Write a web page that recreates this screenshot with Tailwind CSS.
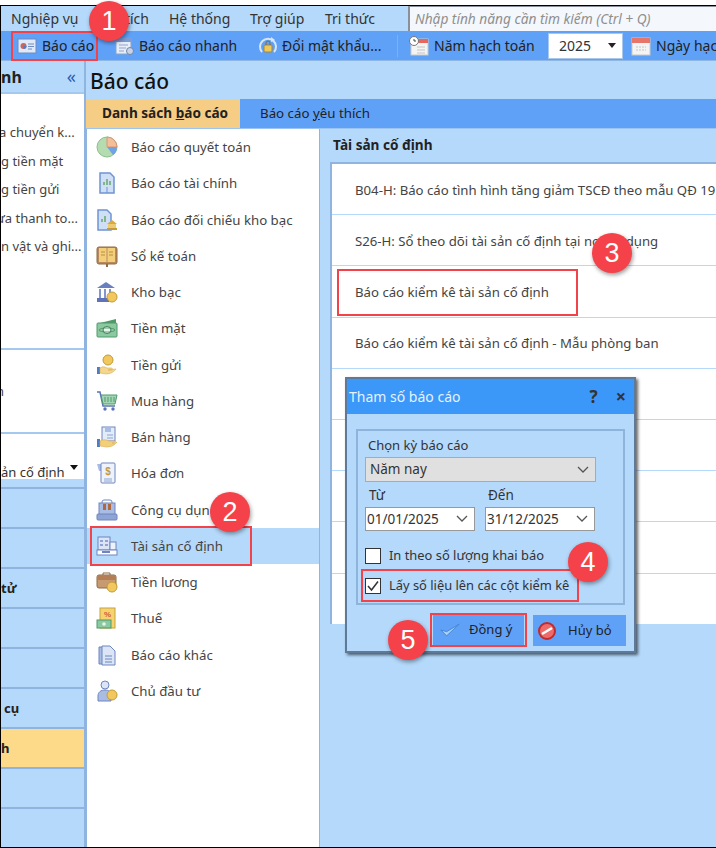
<!DOCTYPE html>
<html lang="vi">
  <head>
    <meta charset="UTF-8" />
    <title>Báo cáo</title>
    <script src="https://cdn.jsdelivr.net/npm/@tailwindcss/browser@4"></script>
  </head>
  <body class="bg-white text-[#222] font-['Noto_Sans',sans-serif] text-[13px]">
    <div class="relative w-[716px] h-[848px] overflow-hidden pt-[5px]">
      <div class="h-[843px] border-y border-l border-black bg-[#b5d9fb] flex flex-col">
        <!-- Menu -->
        <div class="h-[25px] flex items-center shrink-0 text-[14px] text-[#333]">
          <div class="flex w-[407px] shrink-0 pl-[10px] gap-[20px] whitespace-nowrap">
            <span class="w-[68px]">Nghiệp vụ</span>
            <span class="w-[58px] -ml-[8px] flex justify-end overflow-hidden">Phân tích</span>
            <span class="w-[61px]">Hệ thống</span>
            <span class="w-[55px]">Trợ giúp</span>
            <span>Tri thức</span>
          </div>
          <div class="flex-1 h-[25px] bg-[#f4f8fd] border-l-2 border-t border-[#8a9099] pl-[5px] italic text-[#8f8f8f] text-[13.7px] leading-[23px] whitespace-nowrap overflow-hidden">Nhập tính năng cần tìm kiếm (Ctrl + Q)</div>
        </div>
        <!-- Toolbar -->
        <div class="h-[30px] shrink-0 bg-[#60a1f8] border-b border-[#8fb7e6] flex items-center text-[14px] text-[#222] whitespace-nowrap overflow-hidden">
          <div class="w-[107px] shrink-0 pl-[16px] flex items-center gap-[5px]">
            <svg class="shrink-0" width="20" height="18" viewBox="0 0 20 18"><rect x="1" y="2" width="18" height="14" fill="#dfe9f8" stroke="#6f8cc0"/><circle cx="6.500" cy="9" r="3" fill="#c9675f"/><path d="M6.500 9h3a3 3 0 0 1-3 3z" fill="#4f7cc6"/><path d="M11 7h6M11 9.500h6M11 12h4" stroke="#6f8cc0"/></svg>
            <span>Báo cáo</span>
          </div>
          <div class="w-[143px] shrink-0 pl-[7px] flex items-center gap-[4px]">
            <svg class="shrink-0" width="20" height="20" viewBox="0 0 20 20"><rect x="1" y="3" width="15" height="15" fill="#e8eef8" stroke="#8aa3c8"/><rect x="1" y="3" width="15" height="3" fill="#7f9bd4"/><path d="M4 9h9M4 12h7M4 15h5" stroke="#8ea6cc"/><circle cx="15" cy="15" r="3.500" fill="#c7d4e8" stroke="#6f85aa"/></svg>
            <span>Báo cáo nhanh</span>
          </div>
          <div class="w-[146px] shrink-0 pl-[7px] flex items-center gap-[4px]">
            <svg class="shrink-0" width="20" height="20" viewBox="0 0 20 20"><path d="M4 16A8 8 0 1 1 16 16" fill="none" stroke="#dbe6f5" stroke-width="2"/><path d="M13 1l4 3-4 2z" fill="#dbe6f5"/><rect x="6" y="9" width="8" height="7" rx="1" fill="#f0c95b" stroke="#a98530"/><path d="M8 9V7a2 2 0 0 1 4 0v2" fill="none" stroke="#7d6a3d"/></svg>
            <span>Đổi mật khẩu...</span>
          </div>
          <div class="w-px h-[22px] shrink-0 bg-[#7fb1ef]"></div>
          <div class="w-[150px] shrink-0 pl-[11px] flex items-center gap-[5px]">
            <svg class="shrink-0" width="20" height="20" viewBox="0 0 20 20"><rect x="2" y="3" width="17" height="16" fill="#f4f4f4" stroke="#c9c9c9"/><rect x="2" y="3" width="17" height="4" fill="#e8665a"/><path d="M8 11h8M8 14h8M8 17h8" stroke="#c4c4c4"/><circle cx="5" cy="5" r="4.500" fill="#fff" stroke="#777"/><path d="M5 3v2h2" stroke="#444" fill="none"/></svg>
            <span>Năm hạch toán</span>
          </div>
          <div class="w-[75px] h-[26px] shrink-0 bg-white border border-[#a8c8ee] flex items-center justify-between pl-[10px] pr-[6px] text-[#333] text-[14px]">
            <span>2025</span>
            <span class="w-0 h-0 border-x-[4px] border-x-transparent border-t-[5px] border-t-[#222]"></span>
          </div>
          <div class="pl-[8px] shrink-0 flex items-center gap-[5px]">
            <svg class="shrink-0" width="20" height="20" viewBox="0 0 20 20"><rect x="1" y="2" width="18" height="17" fill="#f4f4f4" stroke="#c9c9c9"/><rect x="1" y="2" width="18" height="5" fill="#e8756a"/><path d="M5 11h10M5 14h10" stroke="#c4c4c4" stroke-dasharray="2 1"/></svg>
            <span>Ngày hạch toán</span>
          </div>
        </div>
        <div class="flex-1 flex min-h-0">
          <!-- Sidebar -->
          <div class="w-[85px] shrink-0 border-r-2 border-[#8fb4e0] flex flex-col">
            <div class="h-[33px] shrink-0 flex items-center justify-between pr-[8px] border-b-2 border-[#a5c8ee] font-bold text-[16px] text-[#222]">
              <span>nh</span>
              <span class="text-[#2c5cb0] text-[18px] font-normal">«</span>
            </div>
            <div class="h-[256px] shrink-0 bg-white border-b-2 border-[#a5c8ee] text-[#444] text-[13px] whitespace-nowrap overflow-hidden pt-[24px]">
              <div class="h-[28.5px] leading-[28px] -ml-[2px]">a chuyển k...</div>
              <div class="h-[28.5px] leading-[28px]">g tiền mặt</div>
              <div class="h-[28.5px] leading-[28px]">g tiền gửi</div>
              <div class="h-[28.5px] leading-[28px] -ml-[5px]">ưa thanh to...</div>
              <div class="h-[28.5px] leading-[28px]">n vật và ghi...</div>
            </div>
            <div class="h-[84px] shrink-0 bg-white border-b-2 border-[#a5c8ee] pt-[32px] text-[#444] overflow-hidden"><span class="-ml-[5px] block">n</span></div>
            <div class="h-[45px] shrink-0 bg-white flex items-end justify-between pr-[6px] text-[13px] text-[#333] whitespace-nowrap">
              <span class="leading-[14px]">ản cố định</span>
              <span class="w-0 h-0 border-x-[4px] border-x-transparent border-t-[5px] border-t-[#111] mb-[9px]"></span>
            </div>
            <div class="h-[8px] shrink-0"></div>
            <div class="flex-1 flex flex-col font-bold text-[13px] text-[#222]">
              <div class="h-[40px] border-t-2 border-[#8fb4e0]"></div>
              <div class="h-[40px] border-t-2 border-[#8fb4e0]"></div>
              <div class="h-[40px] border-t-2 border-[#8fb4e0] leading-[38px]">tử</div>
              <div class="h-[40px] border-t-2 border-[#8fb4e0]"></div>
              <div class="h-[40px] border-t-2 border-[#8fb4e0]"></div>
              <div class="h-[40px] border-t-2 border-[#8fb4e0] leading-[38px] pl-[3px]">cụ</div>
              <div class="h-[40px] border-t-2 border-[#8fb4e0] bg-[#fdd98a] leading-[38px]">h</div>
              <div class="h-[40px] border-t-2 border-[#8fb4e0]"></div>
              <div class="h-[40px] border-t-2 border-[#8fb4e0]"></div>
            </div>
          </div>
          <!-- Main -->
          <div class="flex-1 flex flex-col min-w-0">
            <div class="h-[38px] shrink-0 flex items-center pl-[4px] pt-[3px] text-[21px] font-medium text-[#111]">Báo cáo</div>
            <div class="h-[30px] shrink-0 bg-[#60a1f8] border-b border-[#9cc4f2] flex items-stretch text-[13.3px]">
              <div class="w-[154px] bg-[#f5cd85] flex items-center pl-[16px] font-bold text-[13.6px] text-[#222] whitespace-nowrap"><span>Danh sách <u>b</u>áo cáo</span></div>
              <div class="pl-[20px] flex items-center text-[#222]"><span>Báo cáo <u>y</u>êu thích</span></div>
            </div>
            <div class="flex-1 flex min-h-0">
              <!-- Report groups -->
              <div class="w-[233px] shrink-0 bg-white border-l border-[#8fb4e0] text-[#444] text-[13.25px]">
                <div class="h-[36.25px] flex items-center pl-[9px] gap-[13px]">
                  <svg class="shrink-0" width="22" height="22" viewBox="0 0 22 22"><circle cx="11" cy="11" r="10" fill="#b5dcb0" stroke="#8cbf8a"/><path d="M11 11V1a10 10 0 0 1 10 10z" fill="#f3bf9b" stroke="#d99670"/><path d="M11 11h10a10 10 0 0 1-4 8z" fill="#6fa3e6"/></svg>
                  <span class="pt-[2px]">Báo cáo quyết toán</span>
                </div>
                <div class="h-[36.25px] flex items-center pl-[9px] gap-[13px]">
                  <svg class="shrink-0" width="22" height="22" viewBox="0 0 22 22"><path d="M4 1h10l4 4v16H4z" fill="#cfe0f6" stroke="#6f94d4" stroke-width="1.500"/><path d="M8 10v3M11 7v6M14 9v4" stroke="#6aa66a" stroke-width="1.500"/><path d="M11 15v6" stroke="#6f94d4"/></svg>
                  <span class="pt-[2px]">Báo cáo tài chính</span>
                </div>
                <div class="h-[36.25px] flex items-center pl-[9px] gap-[13px]">
                  <svg class="shrink-0" width="22" height="22" viewBox="0 0 22 22"><path d="M2 1h9l4 4v16H2z" fill="#cfe0f6" stroke="#6f94d4" stroke-width="1.500"/><path d="M6 10v3M9 7v6" stroke="#6aa66a" stroke-width="1.500"/><path d="M11 15l5-4 5 4z" fill="#d9a93f"/><rect x="12" y="15" width="8" height="4" fill="#eccb73"/><rect x="11" y="19" width="10" height="2" fill="#c99a34"/></svg>
                  <span class="pt-[2px]">Báo cáo đối chiếu kho bạc</span>
                </div>
                <div class="h-[36.25px] flex items-center pl-[9px] gap-[13px]">
                  <svg class="shrink-0" width="22" height="22" viewBox="0 0 22 22"><rect x="1" y="2" width="20" height="17" rx="2" fill="#b98a5e" stroke="#8f6a45"/><rect x="3" y="3" width="7.500" height="14" fill="#f3cf7c"/><rect x="11.500" y="3" width="7.500" height="14" fill="#f3cf7c"/><path d="M5 7h4M5 10h4M13 7h4M13 10h4" stroke="#b98f3d"/><rect x="10" y="19" width="2" height="3" fill="#8f6a45"/></svg>
                  <span class="pt-[2px]">Sổ kế toán</span>
                </div>
                <div class="h-[36.25px] flex items-center pl-[9px] gap-[13px]">
                  <svg class="shrink-0" width="22" height="22" viewBox="0 0 22 22"><path d="M1 7l9-6 9 6z" fill="#6a7fc0"/><path d="M3 8h2v9H3zM8 8h2v9H8zM13 8h2v5h-2z" fill="#8297d0"/><rect x="1" y="17" width="12" height="4" fill="#5f74b8"/><circle cx="16" cy="16" r="5" fill="#f2c85e" stroke="#c29a35"/></svg>
                  <span class="pt-[2px]">Kho bạc</span>
                </div>
                <div class="h-[36.25px] flex items-center pl-[9px] gap-[13px]">
                  <svg class="shrink-0" width="22" height="22" viewBox="0 0 22 22"><path d="M4 6l16-4v4z" fill="#4f9a68"/><rect x="1" y="6" width="20" height="14" rx="1" fill="#8cc9a0" stroke="#4f9a68"/><ellipse cx="11" cy="13" rx="4" ry="3.500" fill="#e4f4e8" stroke="#3f8458"/><ellipse cx="11" cy="13" rx="8" ry="2" fill="none" stroke="#3f8458" stroke-width=".7"/></svg>
                  <span class="pt-[2px]">Tiền mặt</span>
                </div>
                <div class="h-[36.25px] flex items-center pl-[9px] gap-[13px]">
                  <svg class="shrink-0" width="22" height="22" viewBox="0 0 22 22"><circle cx="12" cy="6" r="5" fill="#f2c85e" stroke="#c29a35"/><rect x="1" y="13" width="3" height="7" fill="#4f7cc6"/><path d="M4 14c3-2 5-1 7 0h4c2 0 2 2 0 2h-3c3 0 6-1 8-1-2 3-6 5-10 5l-6-1z" fill="#f4d78f" stroke="#d6ad55" stroke-width=".6"/></svg>
                  <span class="pt-[2px]">Tiền gửi</span>
                </div>
                <div class="h-[36.25px] flex items-center pl-[9px] gap-[13px]">
                  <svg class="shrink-0" width="22" height="22" viewBox="0 0 22 22"><path d="M1 2h3l3 14h12" fill="none" stroke="#5b74b5" stroke-width="1.500"/><path d="M5 5h16l-2 9H7z" fill="#a3d4b6" stroke="#4f9a68"/><path d="M9 7v5M12 7v5M15 7v5M18 7v5" stroke="#4f9a68"/><circle cx="9" cy="19" r="1.700" fill="#5b74b5"/><circle cx="17" cy="19" r="1.700" fill="#5b74b5"/></svg>
                  <span class="pt-[2px]">Mua hàng</span>
                </div>
                <div class="h-[36.25px] flex items-center pl-[9px] gap-[13px]">
                  <svg class="shrink-0" width="22" height="22" viewBox="0 0 22 22"><rect x="6" y="1" width="13" height="14" fill="#e3ecf9" stroke="#6f85c0"/><rect x="9" y="2" width="6" height="4" fill="#a9bde4"/><path d="M11 9h6M11 12h6" stroke="#8ea4d4"/><rect x="1" y="13" width="3" height="8" fill="#4f7cc6"/><path d="M4 15c4-2 7-1 9 0h6c1 1-1 2-3 2 2 0 4 0 5-1-2 3-6 5-10 5l-7-1z" fill="#f4cf79" stroke="#d6ad55" stroke-width=".6"/></svg>
                  <span class="pt-[2px]">Bán hàng</span>
                </div>
                <div class="h-[36.25px] flex items-center pl-[9px] gap-[13px]">
                  <svg class="shrink-0" width="22" height="22" viewBox="0 0 22 22"><path d="M1 2h5v7H3z" fill="#a9bde4"/><rect x="5" y="1" width="14" height="20" rx="1" fill="#eef3fb" stroke="#6f85c0"/><path d="M8 17h8M8 19h8" stroke="#8ea4d4"/><text x="12" y="13" text-anchor="middle" font-size="10" font-weight="700" fill="#c49a35" font-family="Liberation Sans">$</text></svg>
                  <span class="pt-[2px]">Hóa đơn</span>
                </div>
                <div class="h-[36.25px] flex items-center pl-[9px] gap-[13px]">
                  <svg class="shrink-0" width="22" height="22" viewBox="0 0 22 22"><path d="M6 5V3a2 2 0 0 1 2-2h6a2 2 0 0 1 2 2v2" fill="none" stroke="#6f85c0"/><rect x="3" y="4" width="16" height="12" fill="#a9bde4" stroke="#6f85c0"/><path d="M7 5h3v6H7zM12 5h3v6h-3z" fill="#b0693f"/><rect x="1" y="15" width="20" height="6" rx="1" fill="#8ea4d4" stroke="#6f85c0"/></svg>
                  <span class="pt-[2px]">Công cụ dụng cụ</span>
                </div>
                <div class="h-[36.25px] flex items-center pl-[9px] gap-[13px] bg-[#b5d9fb]">
                  <svg class="shrink-0" width="22" height="22" viewBox="0 0 22 22"><rect x="2" y="2" width="12" height="13" fill="#dbe5f6" stroke="#6f85c0"/><path d="M4 5h3v2H4zM9 5h3v2H9zM4 9h3v2H4zM9 9h3v2H9z" fill="#8ea4d4"/><rect x="14" y="7" width="6" height="8" fill="#eef3fb" stroke="#6f85c0"/><rect x="1" y="15" width="20" height="5" fill="#fff" stroke="#6f85c0"/><rect x="6" y="16" width="8" height="2" fill="#6f85c0"/></svg>
                  <span class="pt-[2px]">Tài sản cố định</span>
                </div>
                <div class="h-[36.25px] flex items-center pl-[9px] gap-[13px]">
                  <svg class="shrink-0" width="22" height="22" viewBox="0 0 22 22"><path d="M7 4V2h7v2" fill="none" stroke="#8f6a45"/><rect x="1" y="4" width="19" height="13" rx="2" fill="#c89a72" stroke="#8f6a45"/><rect x="1" y="4" width="19" height="5" fill="#b47f55"/><circle cx="16" cy="16" r="5" fill="#f2c85e" stroke="#c29a35"/></svg>
                  <span class="pt-[2px]">Tiền lương</span>
                </div>
                <div class="h-[36.25px] flex items-center pl-[9px] gap-[13px]">
                  <svg class="shrink-0" width="22" height="22" viewBox="0 0 22 22"><rect x="4" y="1" width="15" height="20" fill="#f5d470" stroke="#c9a23b"/><text x="11.500" y="10" text-anchor="middle" font-size="8" font-weight="700" fill="#d2553f" font-family="Liberation Sans">%</text><rect x="1" y="13" width="14" height="8" fill="#8cc9a0" stroke="#4f9a68"/><circle cx="8" cy="17" r="1.800" fill="#e4f4e8"/></svg>
                  <span class="pt-[2px]">Thuế</span>
                </div>
                <div class="h-[36.25px] flex items-center pl-[9px] gap-[13px]">
                  <svg class="shrink-0" width="22" height="22" viewBox="0 0 22 22"><path d="M3 3h8v17H3z" fill="#a9bde4" stroke="#6f85c0"/><path d="M6 2h8l5 5v14H6z" fill="#dbe5f6" stroke="#6f85c0"/><path d="M9 12h7M9 15h7M9 18h7" stroke="#6f85c0"/></svg>
                  <span class="pt-[2px]">Báo cáo khác</span>
                </div>
                <div class="h-[36.25px] flex items-center pl-[9px] gap-[13px]">
                  <svg class="shrink-0" width="22" height="22" viewBox="0 0 22 22"><circle cx="9" cy="5" r="4" fill="#dbe5f6" stroke="#6f85c0"/><path d="M2 21v-5c0-4 3-6 7-6s6 2 6 6v5z" fill="#a9bde4" stroke="#6f85c0"/><circle cx="16" cy="15" r="5" fill="#f2c85e" stroke="#c29a35"/></svg>
                  <span class="pt-[2px]">Chủ đầu tư</span>
                </div>
              </div>
              <!-- Reports -->
              <div class="flex-1 min-w-0 border-l border-[#8fb4e0] pl-[10px] flex flex-col">
                <div class="h-[33px] shrink-0 flex items-center pl-[3px] font-bold text-[#222] text-[13.6px]">Tài sản cố định</div>
                <div class="h-[462px] shrink-0 bg-white border-l-2 border-t-2 border-[#8fb4e0] text-[#444] text-[13.2px] whitespace-nowrap overflow-hidden">
                  <div class="h-[51.2px] flex items-center pl-[23px] pt-[3px] border-b border-[#b5d9fb]">B04-H: Báo cáo tình hình tăng giảm TSCĐ theo mẫu QĐ 19</div>
                  <div class="h-[51.2px] flex items-center pl-[23px] pt-[3px] border-b border-[#b5d9fb]">S26-H: Sổ theo dõi tài sản cố định tại nơi sử dụng</div>
                  <div class="h-[51.2px] flex items-center pl-[23px] pt-[3px] border-b border-[#b5d9fb]">Báo cáo kiểm kê tài sản cố định</div>
                  <div class="h-[51.2px] flex items-center pl-[23px] pt-[3px] border-b border-[#b5d9fb]">Báo cáo kiểm kê tài sản cố định - Mẫu phòng ban</div>
                  <div class="h-[51.2px] border-b border-[#b5d9fb]"></div>
                  <div class="h-[51.2px] border-b border-[#b5d9fb]"></div>
                  <div class="h-[51.2px] border-b border-[#b5d9fb]"></div>
                  <div class="h-[51.2px] border-b border-[#b5d9fb]"></div>
                  <div class="h-[51.2px]"></div>
                </div>
              </div>
            </div>
          </div>
        </div>
      </div>

      <!-- Dialog -->
      <div class="absolute left-[345px] top-[377px] w-[291px] h-[276px] bg-[#b5d9fb] border-2 border-[#5f7a99] shadow-[2px_2px_3px_rgba(0,0,0,0.6)] flex flex-col">
        <div class="h-[35px] shrink-0 bg-[#3b97f8] flex items-center justify-between pl-[2px] pr-[8px] text-[14px] text-[#e6f2ff] whitespace-nowrap">
          <span>Tham số báo cáo</span>
          <span class="flex items-center gap-[18px] font-bold text-[#333]"><span class="text-[17px]">?</span><span class="text-[18px]">×</span></span>
        </div>
        <div class="mx-[9px] mt-[15px] h-[176px] border-2 border-[#8fb4dc] pl-[7px] pr-[27px] text-[#333] text-[13px]">
          <div class="h-[26px] pl-[3px] pt-[4px] leading-[20px]">Chọn kỳ báo cáo</div>
          <div class="h-[25px] bg-[#e0e0e0] border border-[#aaa] flex items-center justify-between pl-[4px] pr-[6px] text-[13.5px]">
            <span>Năm nay</span>
            <svg width="12" height="8" viewBox="0 0 12 8"><path d="M1 1l5 5 5-5" fill="none" stroke="#555" stroke-width="1.300"/></svg>
          </div>
          <div class="mt-[3px] flex gap-[10px] h-[22px] leading-[20px] text-[13.5px]">
            <span class="w-[110px] pl-[4px]">Từ</span>
            <span class="pl-[3px]">Đến</span>
          </div>
          <div class="flex gap-[10px] text-[13.5px]">
            <div class="w-[110px] h-[24px] bg-white border border-[#999] flex items-center justify-between pl-[1px] pr-[6px]">
              <span>01/01/2025</span>
              <svg width="12" height="8" viewBox="0 0 12 8"><path d="M1 1l5 5 5-5" fill="none" stroke="#555" stroke-width="1.300"/></svg>
            </div>
            <div class="w-[110px] h-[24px] bg-white border border-[#999] flex items-center justify-between pl-[1px] pr-[6px]">
              <span>31/12/2025</span>
              <svg width="12" height="8" viewBox="0 0 12 8"><path d="M1 1l5 5 5-5" fill="none" stroke="#555" stroke-width="1.300"/></svg>
            </div>
          </div>
          <div class="mt-[17px] flex items-center gap-[8px] h-[16px] text-[12.9px]">
            <span class="w-[16px] h-[16px] bg-white border border-[#333]"></span>
            <span>In theo số lượng khai báo</span>
          </div>
          <div class="mt-[14px] flex items-center gap-[8px] h-[16px] text-[12.9px]">
            <span class="w-[16px] h-[16px] bg-white border border-[#333] flex items-center justify-center">
              <svg width="12" height="12" viewBox="0 0 12 12"><path d="M1 6l3.500 4L11 1.500" fill="none" stroke="#333" stroke-width="1.500"/></svg>
            </span>
            <span>Lấy số liệu lên các cột kiểm kê</span>
          </div>
        </div>
        <div class="pl-[86px] mt-[10px] flex gap-[9px] text-[13px] text-[#222] whitespace-nowrap">
          <div class="w-[91px] h-[30px] bg-[#60a1f8] flex items-center pl-[7px] gap-[9px]">
            <svg class="shrink-0" width="20" height="16" viewBox="0 0 24 16"><path d="M1 8l7 7L23 1 8 10z" fill="#a8d0f8" stroke="#3f7fd0"/></svg>
            <span>Đồng ý</span>
          </div>
          <div class="w-[93px] h-[31px] bg-[#60a1f8] flex items-center pl-[4px] gap-[11px]">
            <svg class="shrink-0" width="20" height="20" viewBox="0 0 20 20"><circle cx="10" cy="10" r="8" fill="#ef6b6b" stroke="#c22b2b" stroke-width="2"/><path d="M5 13l10-6" stroke="#fff" stroke-width="2.500"/></svg>
            <span>Hủy bỏ</span>
          </div>
        </div>
      </div>

      <!-- Callout frames -->
      <div class="absolute left-[11px] top-[31px] w-[87px] h-[30px] border-2 border-[#f2434b]"></div>
      <div class="absolute left-[90px] top-[526px] w-[162px] h-[40px] border-2 border-[#f2434b]"></div>
      <div class="absolute left-[337px] top-[269px] w-[241px] h-[47px] border-2 border-[#f2434b]"></div>
      <div class="absolute left-[361px] top-[569px] w-[218px] h-[33px] border-2 border-[#f2434b]"></div>
      <div class="absolute left-[430px] top-[613px] w-[97px] h-[34px] border-2 border-[#f2434b]"></div>

      <!-- Callout numbers -->
      <div class="absolute left-[89px] top-[1px] w-[40px] h-[40px] rounded-full bg-[#f5424a] shadow-[1px_2px_4px_rgba(0,0,0,0.4)] flex items-center justify-center text-white text-[27px] font-['Liberation_Sans',sans-serif]">1</div>
      <div class="absolute left-[210px] top-[492px] w-[40px] h-[40px] rounded-full bg-[#f5424a] shadow-[1px_2px_4px_rgba(0,0,0,0.4)] flex items-center justify-center text-white text-[27px] font-['Liberation_Sans',sans-serif]">2</div>
      <div class="absolute left-[592px] top-[233px] w-[40px] h-[40px] rounded-full bg-[#f5424a] shadow-[1px_2px_4px_rgba(0,0,0,0.4)] flex items-center justify-center text-white text-[27px] font-['Liberation_Sans',sans-serif]">3</div>
      <div class="absolute left-[568px] top-[542px] w-[40px] h-[40px] rounded-full bg-[#f5424a] shadow-[1px_2px_4px_rgba(0,0,0,0.4)] flex items-center justify-center text-white text-[27px] font-['Liberation_Sans',sans-serif]">4</div>
      <div class="absolute left-[388px] top-[620px] w-[40px] h-[40px] rounded-full bg-[#f5424a] shadow-[1px_2px_4px_rgba(0,0,0,0.4)] flex items-center justify-center text-white text-[27px] font-['Liberation_Sans',sans-serif]">5</div>
    </div>
  </body>
</html>
